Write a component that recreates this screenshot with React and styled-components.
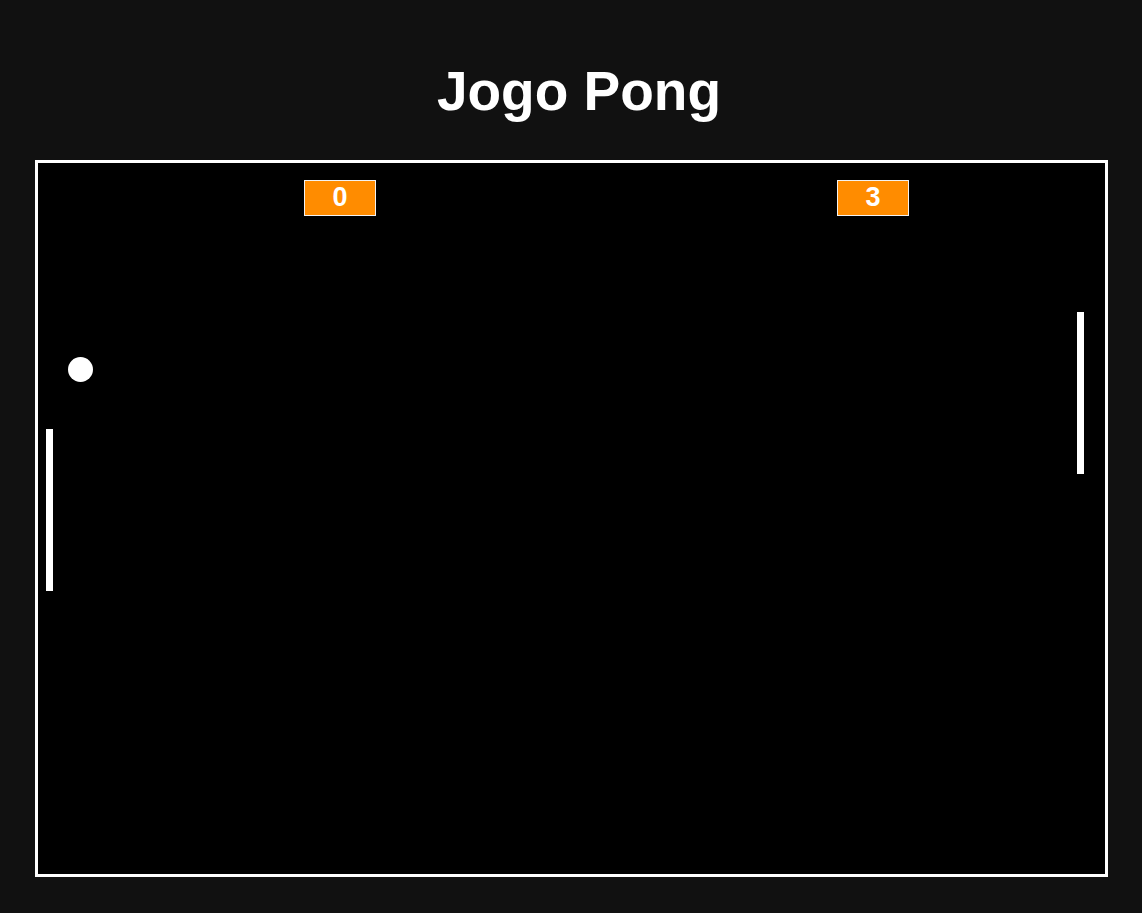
import React from 'react';
import styled, { createGlobalStyle } from 'styled-components';

const GlobalStyle = createGlobalStyle`
    body {
        margin: 0;
        background: #111111;
        font-family: "Liberation Sans", Arial, sans-serif;
    }
`

const Page = styled.div`
    display: flex;
    flex-direction: column;
    align-items: flex-start;
    padding-top: 59px;
    min-height: 913px;
    box-sizing: border-box;
`

const Title = styled.h1`
    align-self: center;
    margin: 0 0 37px 0;
    padding-left: 16px;
    color: #ffffff;
    font-size: 55px;
    font-weight: bold;
    line-height: normal;
`

const Board = styled.div`
    position: relative;
    margin-left: 35px;
    width: 1067px;
    height: 711px;
    border: 3px solid #ffffff;
    background: #000000;
`

const Score = styled.div`
    position: absolute;
    top: 17px;
    left: ${props => props.left}px;
    width: 70px;
    height: 34px;
    border: 1px solid #f2f2f2;
    background: #ff8c00;
    color: #ffffff;
    font-size: 27px;
    font-weight: bold;
    line-height: 33px;
    text-align: center;
`

const Ball = styled.div`
    position: absolute;
    left: 30px;
    top: 194px;
    width: 25px;
    height: 25px;
    border-radius: 50%;
    background: #ffffff;
`

const Paddle = styled.div`
    position: absolute;
    left: ${props => props.left}px;
    top: ${props => props.top}px;
    width: 7px;
    height: 162px;
    background: #ffffff;
`

const App = () => {
    const scores = [0, 3];
    return (
        <Page>
            <GlobalStyle/>
            <Title>Jogo Pong</Title>
            <Board>
                <Score left={266}>{scores[0]}</Score>
                <Score left={799}>{scores[1]}</Score>
                <Ball/>
                <Paddle left={8} top={266}/>
                <Paddle left={1039} top={149}/>
            </Board>
        </Page>
    )
};

export default App;
